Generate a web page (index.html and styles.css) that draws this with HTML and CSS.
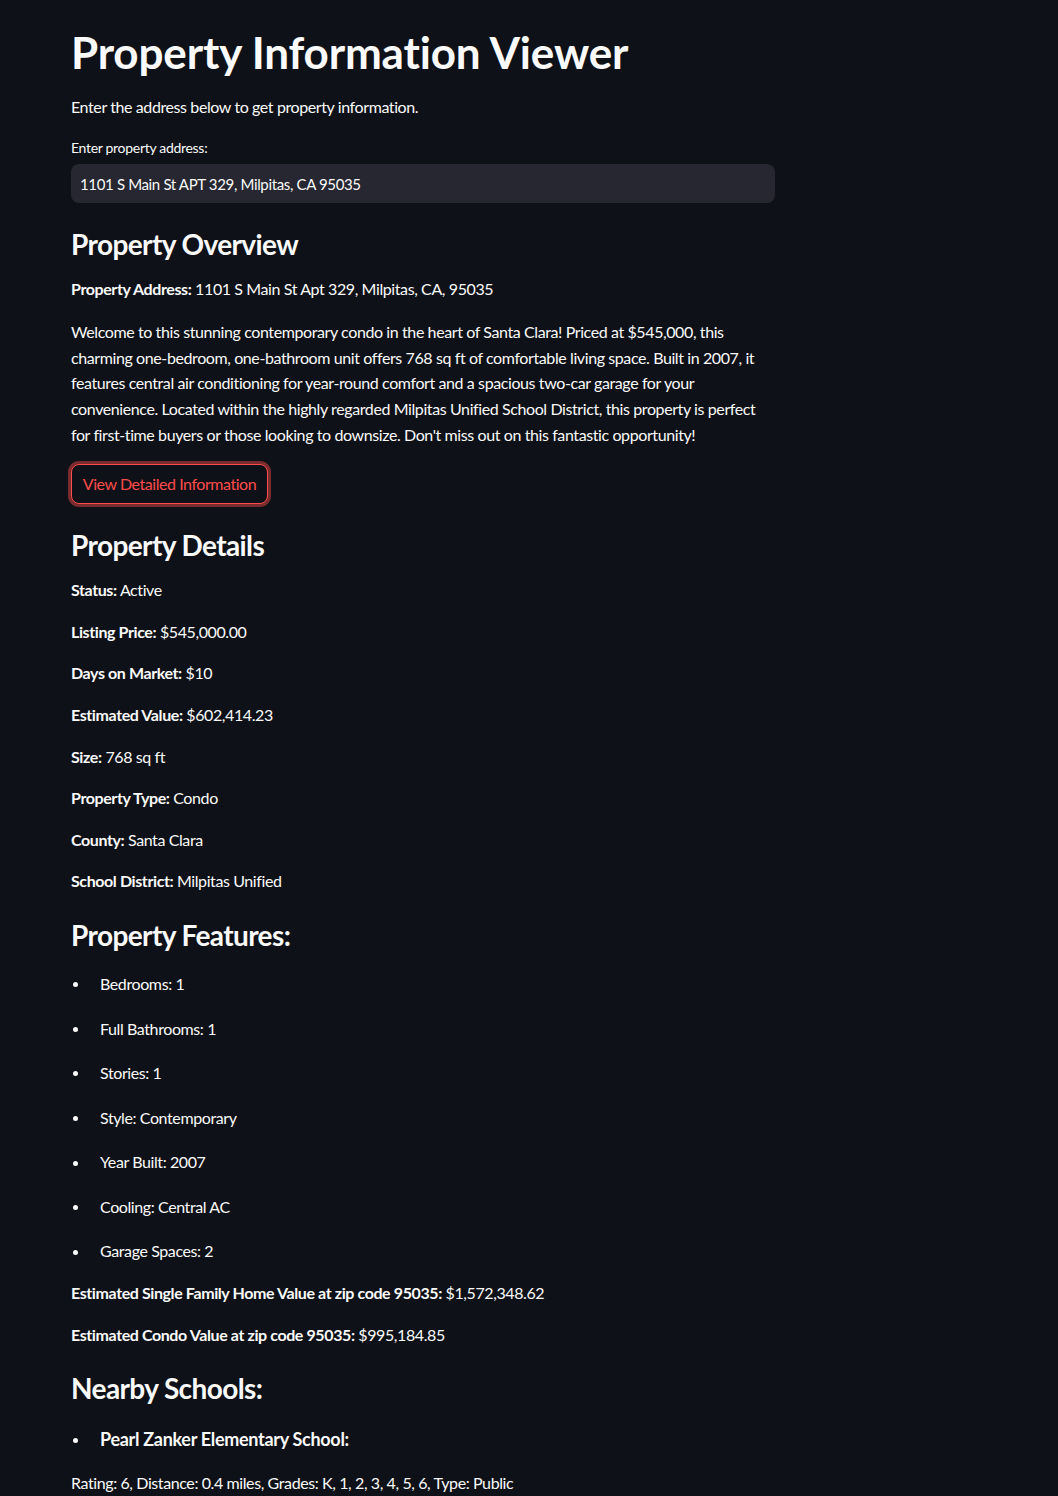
FILE: index.html
```html
<!DOCTYPE html>
<html lang="en">
<head>
<meta charset="utf-8">
<title>Property Information Viewer</title>
<link rel="stylesheet" href="styles.css">
</head>
<body>
<main class="main">
  <h1 class="title">Property Information Viewer</h1>
  <p class="intro">Enter the address below to get property information.</p>
  <label class="label" for="addr">Enter property address:</label>
  <div class="input-box"><input id="addr" class="input" type="text" value="1101 S Main St APT 329, Milpitas, CA 95035"></div>

  <h3 class="h3">Property Overview</h3>
  <p class="p"><b>Property Address:</b> 1101 S Main St Apt 329, Milpitas, CA, 95035</p>
  <p class="p p-desc">Welcome to this stunning contemporary condo in the heart of Santa Clara! Priced at $545,000, this charming one-bedroom, one-bathroom unit offers 768 sq ft of comfortable living space. Built in 2007, it features central air conditioning for year-round comfort and a spacious two-car garage for your convenience. Located within the highly regarded Milpitas Unified School District, this property is perfect for first-time buyers or those looking to downsize. Don't miss out on this fantastic opportunity!</p>
  <button class="btn" type="button">View Detailed Information</button>

  <h3 class="h3">Property Details</h3>
  <p class="p"><b>Status:</b> Active</p>
  <p class="p"><b>Listing Price:</b> $545,000.00</p>
  <p class="p"><b>Days on Market:</b> $10</p>
  <p class="p"><b>Estimated Value:</b> $602,414.23</p>
  <p class="p"><b>Size:</b> 768 sq ft</p>
  <p class="p"><b>Property Type:</b> Condo</p>
  <p class="p"><b>County:</b> Santa Clara</p>
  <p class="p"><b>School District:</b> Milpitas Unified</p>

  <h3 class="h3">Property Features:</h3>
  <ul class="list">
    <li class="item">Bedrooms: 1</li>
    <li class="item">Full Bathrooms: 1</li>
    <li class="item">Stories: 1</li>
    <li class="item">Style: Contemporary</li>
    <li class="item">Year Built: 2007</li>
    <li class="item">Cooling: Central AC</li>
    <li class="item">Garage Spaces: 2</li>
  </ul>
  <p class="p"><b>Estimated Single Family Home Value at zip code 95035:</b> $1,572,348.62</p>
  <p class="p"><b>Estimated Condo Value at zip code 95035:</b> $995,184.85</p>

  <h3 class="h3">Nearby Schools:</h3>
  <ul class="list">
    <li class="item item-school"><h4 class="h4">Pearl Zanker Elementary School:</h4></li>
  </ul>
  <p class="p">Rating: 6, Distance: 0.4 miles, Grades: K, 1, 2, 3, 4, 5, 6, Type: Public</p>
</main>
</body>
</html>
```

FILE: styles.css
```css
html, body {
  margin: 0;
  padding: 0;
  background: #0e1117;
}

body {
  color: #fafafa;
  font-family: "Source Sans Pro", "Lato", "Noto Sans", sans-serif;
  font-size: 16px;
  line-height: 1.6;
  letter-spacing: -0.4px;
}

.main {
  width: 704px;
  padding: 26px 0 0 71px;
  display: flex;
  flex-direction: column;
  align-items: flex-start;
}

.title {
  margin: 0;
  font-size: 44px;
  font-weight: 700;
  line-height: 53px;
  letter-spacing: -0.15px;
}

.intro {
  margin: 15px 0 0;
}

.label {
  margin-top: 18px;
  font-size: 14px;
  line-height: 20px;
  letter-spacing: -0.3px;
}

.input-box {
  margin-top: 6px;
  width: 704px;
  height: 39px;
  background: #262730;
  border-radius: 8px;
  display: flex;
  align-items: center;
}

.input {
  width: 100%;
  border: 0;
  outline: 0;
  background: transparent;
  color: #fafafa;
  font: inherit;
  font-size: 15px;
  letter-spacing: -0.35px;
  padding: 2px 9px 0;
}

.h3 {
  margin: 24px 0 0;
  font-size: 28px;
  font-weight: 700;
  line-height: 34px;
  letter-spacing: -0.6px;
}

.p {
  margin: 16px 0 0;
}

.h3 + .p {
  margin-top: 15px;
}

.p-desc {
  margin-top: 18px;
}

.btn {
  margin-top: 17px;
  width: 197px;
  height: 40px;
  background: #0e1117;
  color: #ff4b4b;
  border: 1px solid #ff4b4b;
  border-radius: 8px;
  box-shadow: 0 0 0 3px rgba(255, 75, 75, 0.45);
  font: inherit;
  font-size: 16px;
  letter-spacing: -0.45px;
  padding: 0;
}

.list {
  margin: 3px 0 0;
  padding: 0;
  list-style: none;
  display: flex;
  flex-direction: column;
  gap: 3px;
}

.item {
  margin-top: 16px;
  display: flex;
  align-items: center;
}

.item::before {
  content: "";
  flex: none;
  width: 5px;
  height: 5px;
  border-radius: 50%;
  background: #fafafa;
  margin: 2px 22px 0 2px;
}

.h4 {
  margin: 0;
  font-size: 18px;
  font-weight: 700;
  line-height: 30px;
  letter-spacing: -0.3px;
}
```
